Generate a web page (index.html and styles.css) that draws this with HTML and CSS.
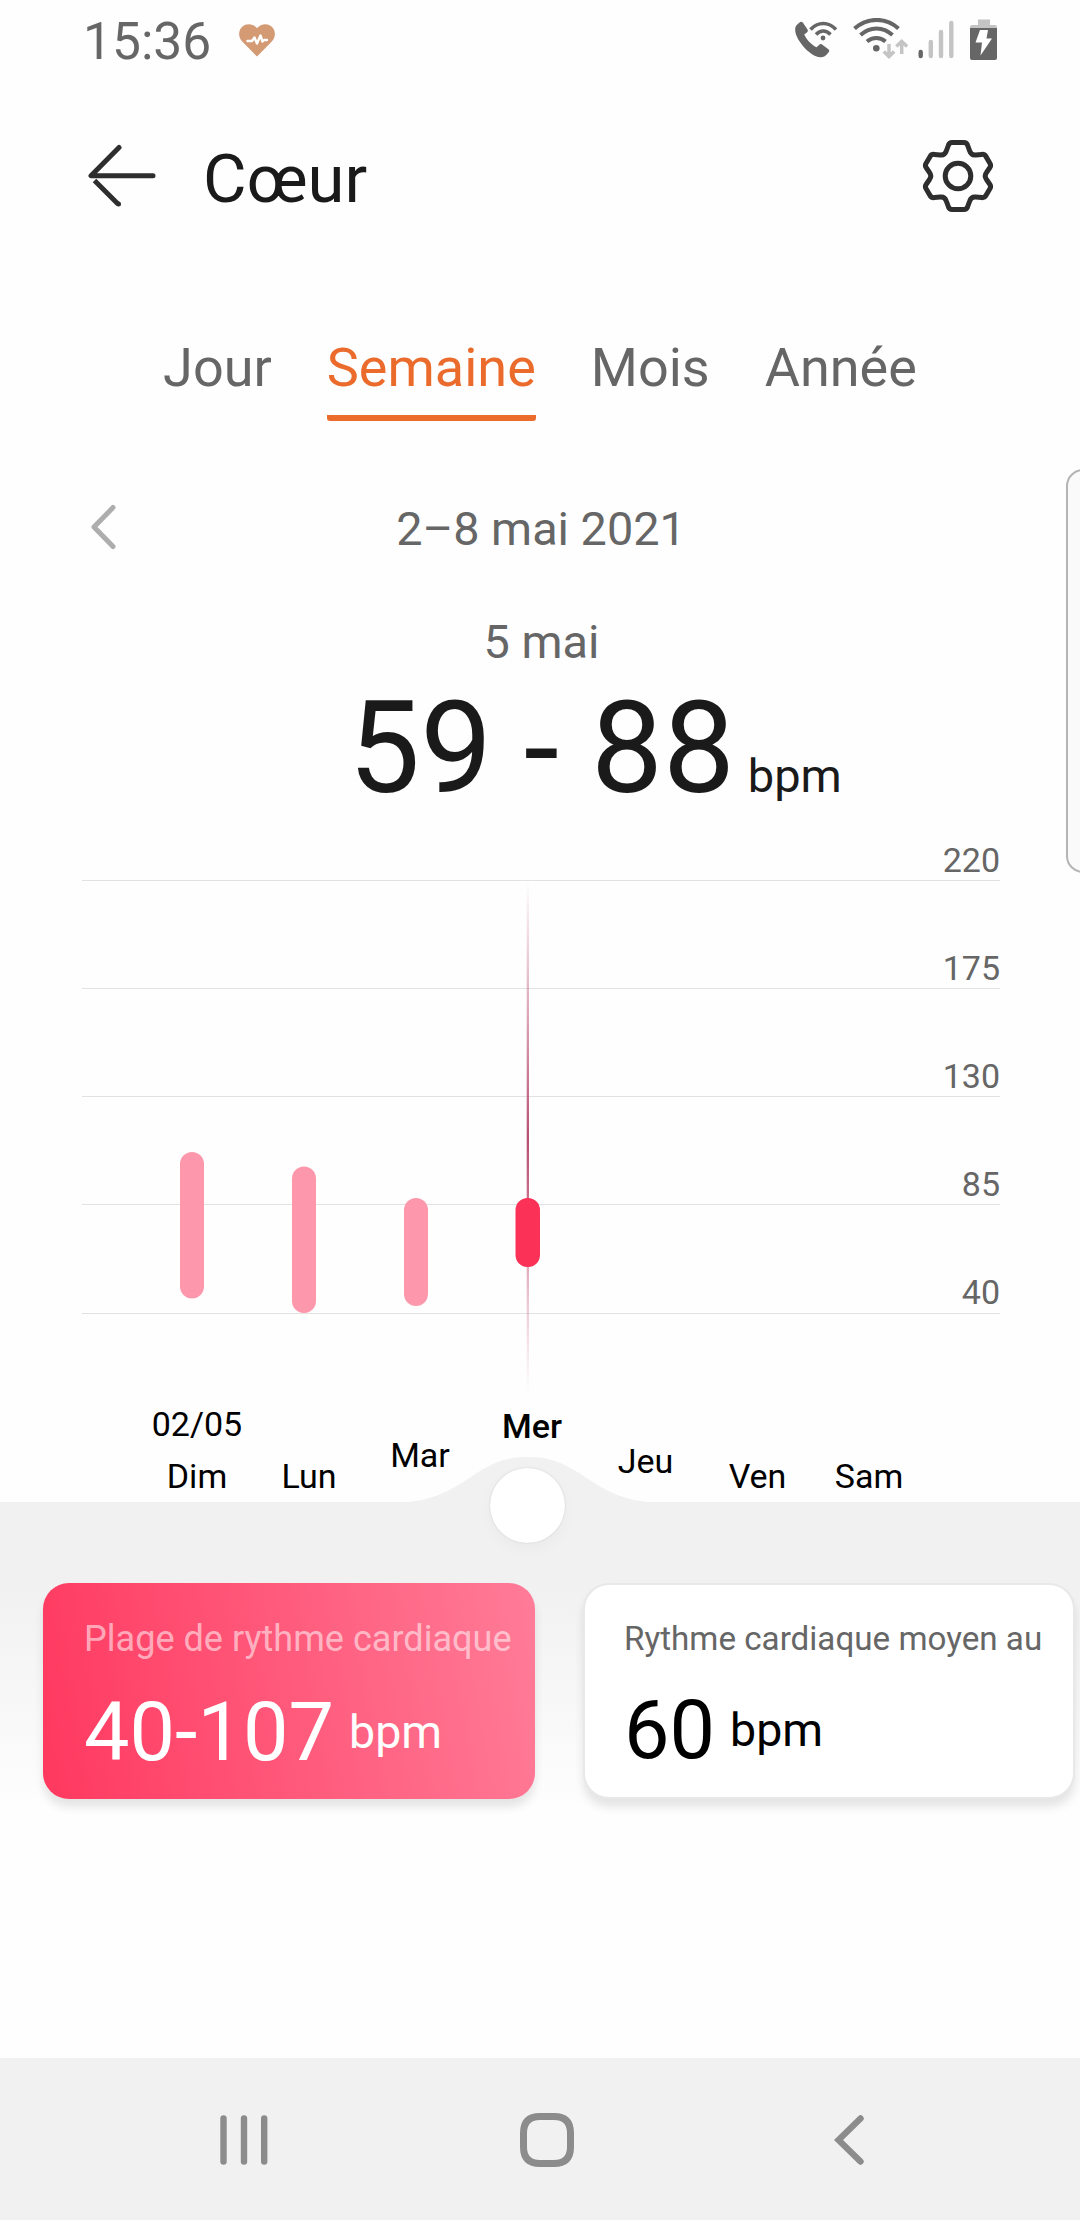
FILE: index.html
```html
<!DOCTYPE html>
<html lang="fr">
<head>
    <meta charset="UTF-8">
    <meta name="viewport" content="width=device-width, initial-scale=1.0">
    <title>Cœur</title>
    <link rel="stylesheet" href="styles.css">
</head>
<body>
    <div class="status-bar">
        <span class="time">15:36</span>
        <svg class="heart" width="36" height="33" viewBox="0 0 36 33">
            <path fill="#d39a74" d="M18 32.5 3.2 17.6C-1 13.2-.8 6.500 3.200 2.800 7.500-1 14-.4 18 4.200 22-.4 28.500-1 32.800 2.800c4 3.700 4.200 10.400 0 14.800z"/>
            <path fill="none" stroke="#fff" stroke-width="2.400" stroke-linejoin="round" stroke-linecap="round" d="M8.500 17h4.500l2.500-3.500 2.500 6 3.500-8 2 6 1.500-1.500h3"/>
        </svg>
        <svg class="status-icons" width="210" height="44" viewBox="0 0 210 44">
            <!-- wifi call -->
            <path fill="#666" d="M7.500 4.500 4.500 7.200C2 10 3 17 8 24c5.500 8 13 14.500 20 15.200 3 .3 5-.7 7-3l1.800-2.200c.8-1 .6-2-.4-2.800L30 26.600c-1-.8-2-.6-2.900.3l-2.600 2.400C19 26.500 14.500 21.500 12.200 16.500l2.700-2c1-.8 1.300-1.700.6-2.900L11 4.800c-1-1.300-2.300-1.300-3.500-.3z"/>
            <g fill="none" stroke="#666" stroke-width="3.600">
                <path d="M18.500 11.500c7.500-8 18-8 25.500 0M24 16.500c4.500-4.600 10-4.600 14.500 0"/>
            </g>
            <circle cx="31" cy="20" r="2.400" fill="#666"/>
            <!-- wifi -->
            <g fill="none" stroke="#666" stroke-width="4">
                <path d="M62.500 10.500c13-11.500 31.500-11.500 44 0M68.500 17c9.500-8.700 22.500-8.700 32 0M75 23.500c5.500-4.800 13-4.800 18.500 0"/>
            </g>
            <circle cx="84.300" cy="30.300" r="3.300" fill="#666"/>
            <g fill="none" stroke="#c4c4c4" stroke-width="3.500">
                <path d="M97 26v12M91.800 33.500l5.200 5 5.200-5M109.700 36V24M104.300 28.500l5.400-5 5.400 5"/>
            </g>
            <!-- signal -->
            <g fill="none" stroke="#c4c4c4" stroke-width="4.400" stroke-linecap="round">
                <path d="M138.800 24v14M149 14v24M159.300 5v33"/>
                <path stroke="#666" d="M128.700 34v4"/>
            </g>
            <!-- battery -->
            <path fill="#c4c4c4" d="M186 1.500h12V7h5q2 0 2 2v2h-27V9q0-2 2-2h6z"/>
            <path fill="#666" d="M178 10h27v30q0 2-2 2h-23q-2 0-2-2z"/>
            <path fill="#fff" d="M188 12h8l-1.500 8.500h5.500l-11.500 17 1.500-13h-6.500z"/>
        </svg>
    </div>

    <header class="header">
        <svg class="back" width="68" height="64" viewBox="0 0 68 64">
            <path fill="none" stroke="#2e2e2e" stroke-width="5" stroke-linecap="round" stroke-linejoin="round" d="M31 3.500 3 31.800h62"/>
            <path fill="none" stroke="#2e2e2e" stroke-width="5" d="M6.500 36.500 30 60"/>
            <circle cx="30.500" cy="60" r="2.500" fill="#2e2e2e"/>
        </svg>
        <h1>Cœur</h1>
        <svg class="gear" width="72" height="76" viewBox="0 0 72 76">
            <path fill="none" stroke="#2e2e2e" stroke-width="5" stroke-linejoin="round" d="M30 4.500h12q2.500 0 3.500 2.500l2.200 6q1.500 4.500 6 4l6-.6q2.800-.3 4.200 2l4 6.800q1.400 2.300 0 4.300l-3.400 5q-2.600 3.500 0 7l3.400 5q1.400 2 0 4.300l-4 6.800q-1.400 2.300-4.200 2l-6-.6q-4.500-.5-6 4l-2.200 6q-1 2.500-3.500 2.500H30q-2.500 0-3.500-2.500l-2.200-6q-1.500-4.500-6-4l-6 .6q-2.800.3-4.200-2l-4-6.800q-1.400-2.300 0-4.300l3.400-5q2.600-3.500 0-7l-3.400-5q-1.400-2 0-4.300l4-6.800q1.400-2.300 4.200-2l6 .6q4.500.5 6-4l2.200-6q1-2.500 3.500-2.500z"/>
            <circle cx="36" cy="38" r="12.800" fill="none" stroke="#2e2e2e" stroke-width="5"/>
        </svg>
    </header>

    <nav class="tabs">
        <a>Jour</a>
        <a class="active">Semaine</a>
        <a>Mois</a>
        <a>Année</a>
    </nav>

    <main>
        <div class="period">
            <svg class="prev" width="28" height="48" viewBox="0 0 28 48">
                <path fill="none" stroke="#adadad" stroke-width="5" stroke-linecap="round" stroke-linejoin="round" d="M23 4.500 4 24l19 19.500"/>
            </svg>
            <span>2–8 mai 2021</span>
        </div>
        <p class="day">5 mai</p>
        <div class="range">
            <strong>59 - 88</strong>
            <span>bpm</span>
        </div>

        <svg class="chart" width="1080" height="662" viewBox="0 840 1080 662">
            <defs>
                <linearGradient id="cursor" x1="0" y1="0" x2="0" y2="1">
                    <stop offset="0" stop-color="#b84468" stop-opacity="0"/>
                    <stop offset=".5" stop-color="#b03c62" stop-opacity=".9"/>
                    <stop offset=".62" stop-color="#bb4b6e" stop-opacity=".8"/>
                    <stop offset="1" stop-color="#d88a9f" stop-opacity="0"/>
                </linearGradient>
            </defs>
            <path class="grid" d="M82 880.500h918M82 988.500h918M82 1096.500h918M82 1204.500h918M82 1313.500h918"/>
            <g class="scale">
                <text x="1000" y="872">220</text>
                <text x="1000" y="980">175</text>
                <text x="1000" y="1088">130</text>
                <text x="1000" y="1196">85</text>
                <text x="1000" y="1304">40</text>
            </g>
            <rect x="526.700" y="882" width="2.300" height="512" fill="url(#cursor)"/>
            <g class="bars">
                <rect x="180" y="1152" width="24" height="146.500" rx="12"/>
                <rect x="292" y="1166.500" width="24" height="146.500" rx="12"/>
                <rect x="404" y="1198" width="24" height="108" rx="12"/>
                <rect class="selected" x="515.500" y="1198" width="24.500" height="69" rx="12"/>
            </g>
            <g class="days">
                <text x="197" y="1436">02/05</text>
                <text x="197" y="1488">Dim</text>
                <text x="309" y="1488">Lun</text>
                <text x="420" y="1467">Mar</text>
                <text class="selected" x="532" y="1438">Mer</text>
                <text x="645.500" y="1473">Jeu</text>
                <text x="757.500" y="1488">Ven</text>
                <text x="869" y="1488">Sam</text>
            </g>
        </svg>

        <section class="panel">
            <svg class="bump" width="1080" height="100" viewBox="0 0 1080 100">
                <path fill="#f1f1f1" d="M400 46.500c34-1 54-14 76-29C496 5 509 1 528 1s32 4 52 16.500c22 15 42 28 76 29z"/>
            </svg>
            <span class="knob"></span>
            <div class="cards">
                <div class="card primary">
                    <h2>Plage de rythme cardiaque</h2>
                    <p><b>40-107</b><span>bpm</span></p>
                </div>
                <div class="card">
                    <h2>Rythme cardiaque moyen au</h2>
                    <p><b>60</b><span>bpm</span></p>
                </div>
            </div>
        </section>
    </main>

    <footer class="navbar">
        <svg width="48" height="50" viewBox="0 0 48 50">
            <path fill="none" stroke="#8c8c8c" stroke-width="6.400" stroke-linecap="round" d="M3.500 3.500v43M24 3.500v43M44.200 3.500v43"/>
        </svg>
        <svg class="home" width="54" height="54" viewBox="0 0 54 54">
            <path fill="none" stroke="#8c8c8c" stroke-width="7" d="M20 3.500h14Q50.500 3.500 50.500 20v14Q50.500 50.500 34 50.500H20Q3.500 50.500 3.500 34V20Q3.500 3.500 20 3.500z"/>
        </svg>
        <svg width="31" height="50" viewBox="0 0 31 50">
            <path fill="none" stroke="#8c8c8c" stroke-width="6.400" stroke-linecap="round" d="M26.500 3.500 4.500 25l22 21.500"/>
        </svg>
    </footer>

    <div class="edge-handle"></div>
</body>
</html>
```
FILE: styles.css
```css
* {
    margin: 0;
    padding: 0;
    box-sizing: border-box;
}

body {
    position: relative;
    width: 1080px;
    height: 2220px;
    overflow: hidden;
    font-family: Roboto, sans-serif;
    background-color: #fefefe;
    color: #1a1a1a;
    display: flex;
    flex-direction: column;
}

svg {
    display: block;
    flex-shrink: 0;
}

/* Status bar */
.status-bar {
    display: flex;
    height: 84px;
    padding: 0 78px 0 83px;
}

.time {
    width: 156px;
    font-size: 51.5px;
    line-height: 83px;
    color: #666;
}

.heart {
    margin-top: 24px;
}

.status-icons {
    margin: 18px 0 0 auto;
}

/* Header */
.header {
    display: flex;
    align-items: center;
    height: 183px;
    padding: 0 86px 0 88px;
}

.header h1 {
    margin-left: 47px;
    padding-top: 7px;
    font-size: 67px;
    font-weight: 400;
    line-height: 80px;
}

.gear {
    margin-left: auto;
}

/* Tabs */
.tabs {
    display: flex;
    justify-content: center;
    gap: 55px;
    padding-top: 69px;
    height: 187px;
    font-size: 54px;
    line-height: 64px;
    color: #666;
}

.tabs a {
    height: 85px;
}

.tabs .active {
    color: #eb6b2d;
    background: linear-gradient(#eb6b2d, #eb6b2d) bottom / 100% 6px no-repeat;
    border-radius: 3px;
}

/* Selected period */
main {
    flex: 1;
}

.period {
    display: grid;
    grid-template-columns: 1fr auto 1fr;
    align-items: center;
    margin-top: 45px;
    height: 60px;
    padding: 0 88px 0 90px;
    font-size: 46.800px;
    color: #666;
}

.prev {
    margin-top: -5px;
}

.day {
    margin-top: 53px;
    padding-left: 3px;
    font-size: 46.800px;
    line-height: 60px;
    text-align: center;
    color: #666;
}

.range {
    display: grid;
    grid-template-columns: 1fr auto 1fr;
    align-items: baseline;
    margin-top: 11px;
    height: 157px;
    padding-left: 3px;
    line-height: 130px;
}

.range strong {
    grid-column: 2;
    font-size: 128px;
    font-weight: 400;
}

.range span {
    padding-left: 13px;
    font-size: 47px;
}

/* Chart */
.chart {
    font-size: 34px;
}

.grid {
    stroke: #e2e2e2;
    stroke-width: 1;
}

.scale {
    fill: #666;
    text-anchor: end;
}

.bars {
    fill: #fd97ab;
}

.bars .selected {
    fill: #fc3158;
}

.days {
    fill: #000;
    text-anchor: middle;
}

.days .selected {
    font-weight: 500;
}

/* Cards panel */
.panel {
    position: relative;
    height: 556px;
    padding: 81px 0 0 43px;
    background: linear-gradient(#f1f1f1 80px, #fefefe 310px);
}

.bump {
    position: absolute;
    top: -46px;
    left: 0;
}

.knob {
    position: absolute;
    top: -34px;
    left: 490px;
    width: 75px;
    height: 75px;
    border-radius: 50%;
    background-color: #fff;
    box-shadow: 0 0 2px rgba(0, 0, 0, 0.15), 0 6px 16px rgba(0, 0, 0, 0.03);
}

.cards {
    display: flex;
    gap: 48px;
}

.card {
    flex: 0 0 492px;
    height: 216px;
    padding: 34px 0 0 39px;
    border: 2px solid #e8e8e8;
    border-radius: 26px;
    background-color: #fff;
    box-shadow: 0 8px 10px rgba(0, 0, 0, 0.1);
    color: #000;
    white-space: nowrap;
}

.card h2 {
    font-size: 33.200px;
    font-weight: 400;
    line-height: 40px;
    color: #666;
}

.card p {
    margin-top: 27px;
    line-height: 90px;
    display: flex;
}

.card b {
    font-size: 81px;
    font-weight: 400;
}

.card span {
    margin-left: 15px;
    font-size: 46.5px;
    line-height: 88px;
}

.card.primary {
    padding: 36px 0 0 41px;
    border: 0;
    background: linear-gradient(80deg, #ff385f, #ff7c98);
    color: #fff;
}

.primary h2 {
    font-size: 36.100px;
    color: rgba(255, 255, 255, 0.55);
}

.primary p {
    margin-top: 29px;
}

/* System navigation */
.navbar {
    display: flex;
    justify-content: space-between;
    align-items: center;
    height: 162px;
    padding: 2px 215px 0 220px;
    background-color: #f1f1f1;
}

.home {
    margin-right: 9px;
}

/* Edge panel handle, runs off the right side */
.edge-handle {
    position: absolute;
    top: 469px;
    left: 1066px;
    width: 34px;
    height: 404px;
    border: 2px solid #b4b4b4;
    border-radius: 17px;
    background-color: #fafafa;
}
```
